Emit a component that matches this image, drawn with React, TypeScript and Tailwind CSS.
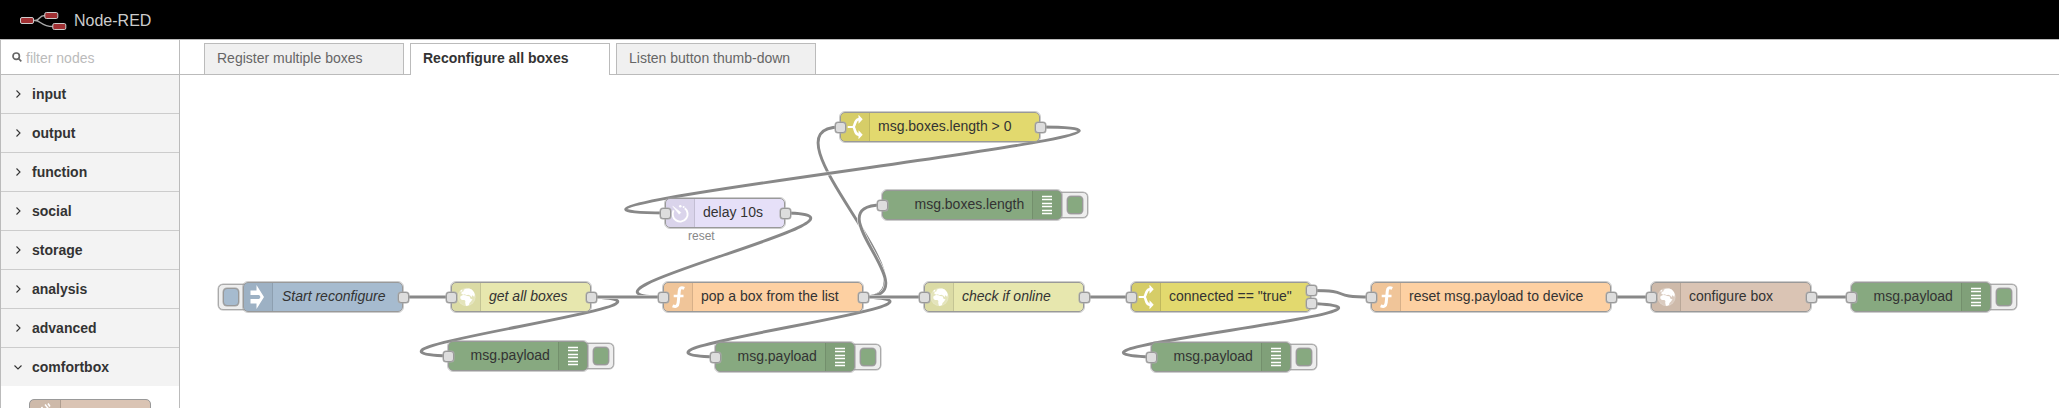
import React from "react";

type IconName = "inject" | "globe" | "fn" | "switch" | "timer" | "debug";

interface FlowNode {
  x: number;
  y: number;
  w: number;
  label: string;
  fill: string;
  icon: IconName;
  labelX: number;
  italic?: boolean;
  input?: boolean;
  outputs?: number[];
  right?: boolean;
  button?: "left" | "right";
  status?: string;
}

const BLUE = "bg-[#a6bbcf]";
const GREEN = "bg-[#87a980]";
const LIME = "bg-[#e7e7ae]";
const YELLOW = "bg-[#e2d96e]";
const ORANGE = "bg-[#fdd0a2]";
const LILAC = "bg-[#e6e0f8]";
const TAN = "bg-[#dac4b4]";

const nodes: FlowNode[] = [
  { x: 243, y: 282, w: 160, label: "Start reconfigure", fill: BLUE, icon: "inject", labelX: 39, italic: true, outputs: [15], button: "left" },
  { x: 451, y: 282, w: 140, label: "get all boxes", fill: LIME, icon: "globe", labelX: 38, italic: true, input: true, outputs: [15] },
  { x: 448, y: 341, w: 140, label: "msg.payload", fill: GREEN, icon: "debug", labelX: 22.5, input: true, right: true, button: "right" },
  { x: 663, y: 282, w: 200, label: "pop a box from the list", fill: ORANGE, icon: "fn", labelX: 38, input: true, outputs: [15] },
  { x: 715, y: 342, w: 140, label: "msg.payload", fill: GREEN, icon: "debug", labelX: 22.5, input: true, right: true, button: "right" },
  { x: 665, y: 198, w: 120, label: "delay 10s", fill: LILAC, icon: "timer", labelX: 38, input: true, outputs: [15], status: "reset" },
  { x: 840, y: 112, w: 200, label: "msg.boxes.length > 0", fill: YELLOW, icon: "switch", labelX: 38, input: true, outputs: [15] },
  { x: 882, y: 190, w: 180, label: "msg.boxes.length", fill: GREEN, icon: "debug", labelX: 32.5, input: true, right: true, button: "right" },
  { x: 924, y: 282, w: 160, label: "check if online", fill: LIME, icon: "globe", labelX: 38, italic: true, input: true, outputs: [15] },
  { x: 1131, y: 282, w: 180, label: 'connected == "true"', fill: YELLOW, icon: "switch", labelX: 38, input: true, outputs: [8.5, 21.5] },
  { x: 1151, y: 342, w: 140, label: "msg.payload", fill: GREEN, icon: "debug", labelX: 22.5, input: true, right: true, button: "right" },
  { x: 1371, y: 282, w: 240, label: "reset msg.payload to device", fill: ORANGE, icon: "fn", labelX: 38, input: true, outputs: [15] },
  { x: 1651, y: 282, w: 160, label: "configure box", fill: TAN, icon: "globe", labelX: 38, input: true, outputs: [15] },
  { x: 1851, y: 282, w: 140, label: "msg.payload", fill: GREEN, icon: "debug", labelX: 22.5, input: true, right: true, button: "right" },
];

// Each wire: start x, start y, end x, end y. Later wires are drawn on top.
const wires: number[][] = [
  [863, 297, 840, 127],
  [863, 297, 882, 205],
  [785, 213, 663, 297],
  [403, 297, 451, 297],
  [591, 297, 448, 356],
  [591, 297, 663, 297],
  [863, 297, 715, 357],
  [863, 297, 924, 297],
  [1040, 127, 665, 213],
  [1084, 297, 1131, 297],
  [1311, 290.5, 1371, 297],
  [1311, 303.5, 1151, 357],
  [1611, 297, 1651, 297],
  [1811, 297, 1851, 297],
];

const NODE_W = 100;
const NODE_H = 30;

function wirePath([x1, y1, x2, y2]: number[]) {
  const dx = x2 - x1;
  const dy = y2 - y1;
  const delta = Math.sqrt(dx * dx + dy * dy);
  let scale = 0.75;
  let scaleY = 0;
  if (delta < NODE_W) {
    scale = 0.75 - 0.75 * ((NODE_W - delta) / NODE_W);
  }
  if (dx < 0) {
    scale += 2 * (Math.min(5 * NODE_W, Math.abs(dx)) / (5 * NODE_W));
    if (Math.abs(dy) < 3 * NODE_H) {
      scaleY =
        (dy > 0 ? 0.5 : -0.5) *
        ((3 * NODE_H - Math.abs(dy)) / (3 * NODE_H)) *
        (Math.min(NODE_W, Math.abs(dx)) / NODE_W);
    }
  }
  const cx = scale * NODE_W;
  const cy = scaleY * NODE_H;
  return `M ${x1} ${y1} C ${x1 + cx} ${y1 + cy} ${x2 - cx} ${y2 - cy} ${x2} ${y2}`;
}

function Icon({ name }: { name: IconName }) {
  const cls = "block h-[30px] w-[30px] shrink-0";
  switch (name) {
    case "inject":
      return (
        <svg viewBox="0 0 30 30" className={cls} fill="#fff">
          <path d="M7.500 8.500h6V3L21 15l-7.500 12v-5.500h-6V17h8.700l1.300-2-1.300-2H7.500z" />
        </svg>
      );
    case "globe":
      return (
        <svg viewBox="0 0 30 30" className={cls} fill="#fff">
          <circle cx="15.500" cy="15" r="8.800" fillOpacity=".25" stroke="#fff" strokeOpacity=".35" strokeWidth=".6" />
          <path d="M9.500 14.200l2.500-1.200 2.500.2 1.500.9 2.500.2 1.200 2.700 1.800.3-1.500 2.200-1.500 1.500-.5 2-2.200 1-1-.6-.6-2.600.2-1.900-1-1-2.600.1-1.600-1.700z" />
          <path d="M10.300 11.800l.4-1.800 1.800-.7.200-1.500 2-1.100 3.500-.3 2.600 1.200 2.200 2.600.8 2.600-.7 2.200-1.200-1.600-.9.200-.2 1.600-1.700-1.800-1.800-.6-1.800.5-1.700-1-1.500.4z" />
          <path d="M9 9.200l1.500-1.500 1 .3-1 1.800z" />
        </svg>
      );
    case "fn":
      return (
        <svg viewBox="0 0 30 30" className={cls} fill="none" stroke="#fff">
          <path d="M21.300 6.300c-3.300-1.500-4.700-.2-5 2.700l-1.100 11.500c-.4 3.600-2 4.700-5.600 3.300" strokeWidth="3" />
          <path d="M10.700 14h9.800" strokeWidth="2.400" />
        </svg>
      );
    case "switch":
      return (
        <svg viewBox="0 0 30 30" className={cls} fill="none" stroke="#fff" strokeWidth="2.600">
          <path d="M13.500 15c2-2.500 1-7 5-7.700h1M13.500 15c2 2.500 1 7 5 7.700h1" />
          <path d="M7.700 15h6.300" strokeWidth="2" />
          <path d="M18.500 2.800l4.200 4.500-4.200 4.500zM18.500 18.200l4.200 4.500-4.200 4.500z" fill="#fff" stroke="none" />
        </svg>
      );
    case "timer":
      return (
        <svg viewBox="0 0 30 30" className={cls} fill="none" stroke="#fff" strokeWidth="1.900">
          <path d="M19.800 10.200a7.500 7.500 0 1 1-11.200 2.200" />
          <path d="M7.800 8.200l8 6.300-1.600 1.700z" fill="#fff" strokeWidth=".6" strokeLinejoin="round" />
          <circle cx="15.300" cy="8.300" r="1.300" fill="#fff" stroke="none" />
          <circle cx="18.600" cy="9" r="1" fill="#fff" stroke="none" />
        </svg>
      );
    case "debug":
      return (
        <svg viewBox="0 0 30 30" className={cls} stroke="#fff" strokeWidth="1.300">
          <path d="M10 6.500h10M10 9.500h10M10 13.500h10M10 16.500h10M10 20.500h10M10 23.500h10" />
        </svg>
      );
  }
}

const Port = ({ left, top }: { left: number; top: number }) => (
  <div
    className="absolute h-[11px] w-[11px] rounded-[3px] border border-[#999] bg-[#ddd] shadow-[0_0_0_0.5px_#aaa]"
    style={{ left, top }}
  />
);

function NodeView({ n }: { n: FlowNode }) {
  return (
    <div className="absolute h-[30px]" style={{ left: n.x, top: n.y, width: n.w }}>
      {n.button && (
        <div
          className={`absolute top-[2px] h-[26px] w-[32px] rounded-[5px] border border-[#aaa] bg-[#eee] shadow-[0_0_0_0.5px_#bbb] ${n.button === "left" ? "left-[-25px]" : "right-[-26px]"}`}
        >
          <div
            className={`absolute top-[3px] h-[18px] w-[16px] rounded-[4px] border border-[#999] shadow-[0_0_0_0.5px_#aaa] ${n.fill} ${n.button === "left" ? "left-[4px]" : "right-[4px]"}`}
          />
        </div>
      )}
      <div
        className={`absolute inset-0 flex overflow-hidden rounded-[5px] border border-[#999] ${n.fill} ${n.right ? "justify-end" : "justify-start"}`}
      >
        <div
          className={`flex h-full w-[29px] items-center justify-center bg-black/5 ${n.right ? "border-l border-black/10" : "border-r border-black/10"}`}
        >
          <Icon name={n.icon} />
        </div>
      </div>
      <div className="absolute -inset-px rounded-[6px] border border-[#999]/50" />
      <div
        className={`absolute top-[4px] text-[14px] leading-5 whitespace-nowrap text-[#333] ${n.italic ? "italic" : ""}`}
        style={{ left: n.labelX }}
      >
        {n.label}
      </div>
      {n.input && <Port left={-5.5} top={9.5} />}
      {n.outputs?.map((y) => <Port key={y} left={n.w - 5.5} top={y - 5.5} />)}
      {n.status && (
        <div className="absolute top-[30px] left-[23px] text-[12px] leading-4 text-[#888]">{n.status}</div>
      )}
    </div>
  );
}

const categories = ["input", "output", "function", "social", "storage", "analysis", "advanced", "comfortbox"];
const tabs = ["Register multiple boxes", "Reconfigure all boxes", "Listen button thumb-down"];

export default function App() {
  return (
    <div className="relative flex h-[408px] w-[2059px] flex-col overflow-hidden bg-white font-['Liberation_Sans',Arial,sans-serif] text-[14px] text-[#333]">
      <header className="flex h-[39px] shrink-0 items-center bg-black pl-[20px]">
        <svg width="47" height="20" viewBox="0 0 47 20" className="mt-px" fill="none" stroke="#aaa">
          <path d="M13 10.500h2c5 0 3.500-5 10-5M15 10.500c6 0 6 6 18 6" strokeWidth="1.400" />
          <g fill="#a03033" stroke="#ccc">
            <rect x=".5" y="7.500" width="13" height="6" rx="1.500" />
            <rect x="24.800" y="2.500" width="13" height="6" rx="1.500" />
            <rect x="32.800" y="13.500" width="13" height="6" rx="1.500" />
          </g>
        </svg>
        <span className="ml-[7px] pt-[2px] text-[16px] leading-5 text-[#ccc]">Node-RED</span>
      </header>
      <div className="flex min-h-0 flex-1 border-t border-l border-[#bbb]">
        <aside className="flex w-[179px] shrink-0 flex-col border-r border-[#bbb]">
          <div className="flex h-[35px] shrink-0 items-center border-b border-[#bbb] pl-[11px]">
            <svg width="10" height="10" viewBox="0 0 10 10" fill="none" stroke="#666" strokeWidth="1.700">
              <circle cx="4.200" cy="4.200" r="3.200" />
              <path d="M6.500 6.500l2.800 2.800" />
            </svg>
            <span className="ml-[4px] pt-[2px] text-[14px] text-[#bbb]">filter nodes</span>
          </div>
          {categories.map((c, i) => {
            const open = i === categories.length - 1;
            return (
              <div
                key={c}
                className={`flex shrink-0 items-center bg-[#f3f3f3] ${open ? "h-[38px]" : "h-[39px] border-b border-[#ccc]"}`}
              >
                <svg width="10" height="10" viewBox="0 0 10 10" className={`ml-[12px] ${open ? "rotate-90" : ""}`} fill="none" stroke="#333" strokeWidth="1.100">
                  <path d="M3.500 1.500L7 5 3.500 8.500" />
                </svg>
                <span className="ml-[9px] leading-5 font-bold">{c}</span>
              </div>
            );
          })}
          <div className="min-h-0 flex-1 overflow-hidden pt-[13px] pl-[28px]">
            <div className="flex h-[28px] w-[122px] rounded-[5px] border border-[#999] bg-[#dac4b4]">
              <div className="w-[31px] border-r border-black/15 bg-black/5">
                <svg width="30" height="28" viewBox="0 0 30 28" fill="none" stroke="#fff" strokeWidth="1.500">
                  <path d="M15 4.500l4 5M11.500 7l3 4M18 3.500l2 3" />
                </svg>
              </div>
            </div>
          </div>
        </aside>
        <main className="min-w-0 flex-1">
          <div className="flex h-[35px] items-end border-b border-[#bbb] pl-[24px]">
            {tabs.map((t, i) => (
              <div
                key={t}
                className={`mr-[6px] w-[200px] border-x border-t border-[#bbb] pl-[12px] leading-[28px] ${i === 1 ? "-mb-px h-[32px] bg-white font-bold text-[#333]" : "h-[31px] bg-[#f0f0f0] text-[#666]"}`}
              >
                {t}
              </div>
            ))}
          </div>
        </main>
      </div>
      <div className="pointer-events-none absolute inset-0">
        <svg width="2059" height="408" className="absolute inset-0" fill="none" stroke="#888" strokeWidth="2.900">
          {wires.map((w, i) => (
            <g key={i}>
              <path d={wirePath(w)} stroke="#fff" strokeWidth="4" />
              <path d={wirePath(w)} />
            </g>
          ))}
        </svg>
        {nodes.map((n, i) => (
          <NodeView key={i} n={n} />
        ))}
      </div>
    </div>
  );
}
